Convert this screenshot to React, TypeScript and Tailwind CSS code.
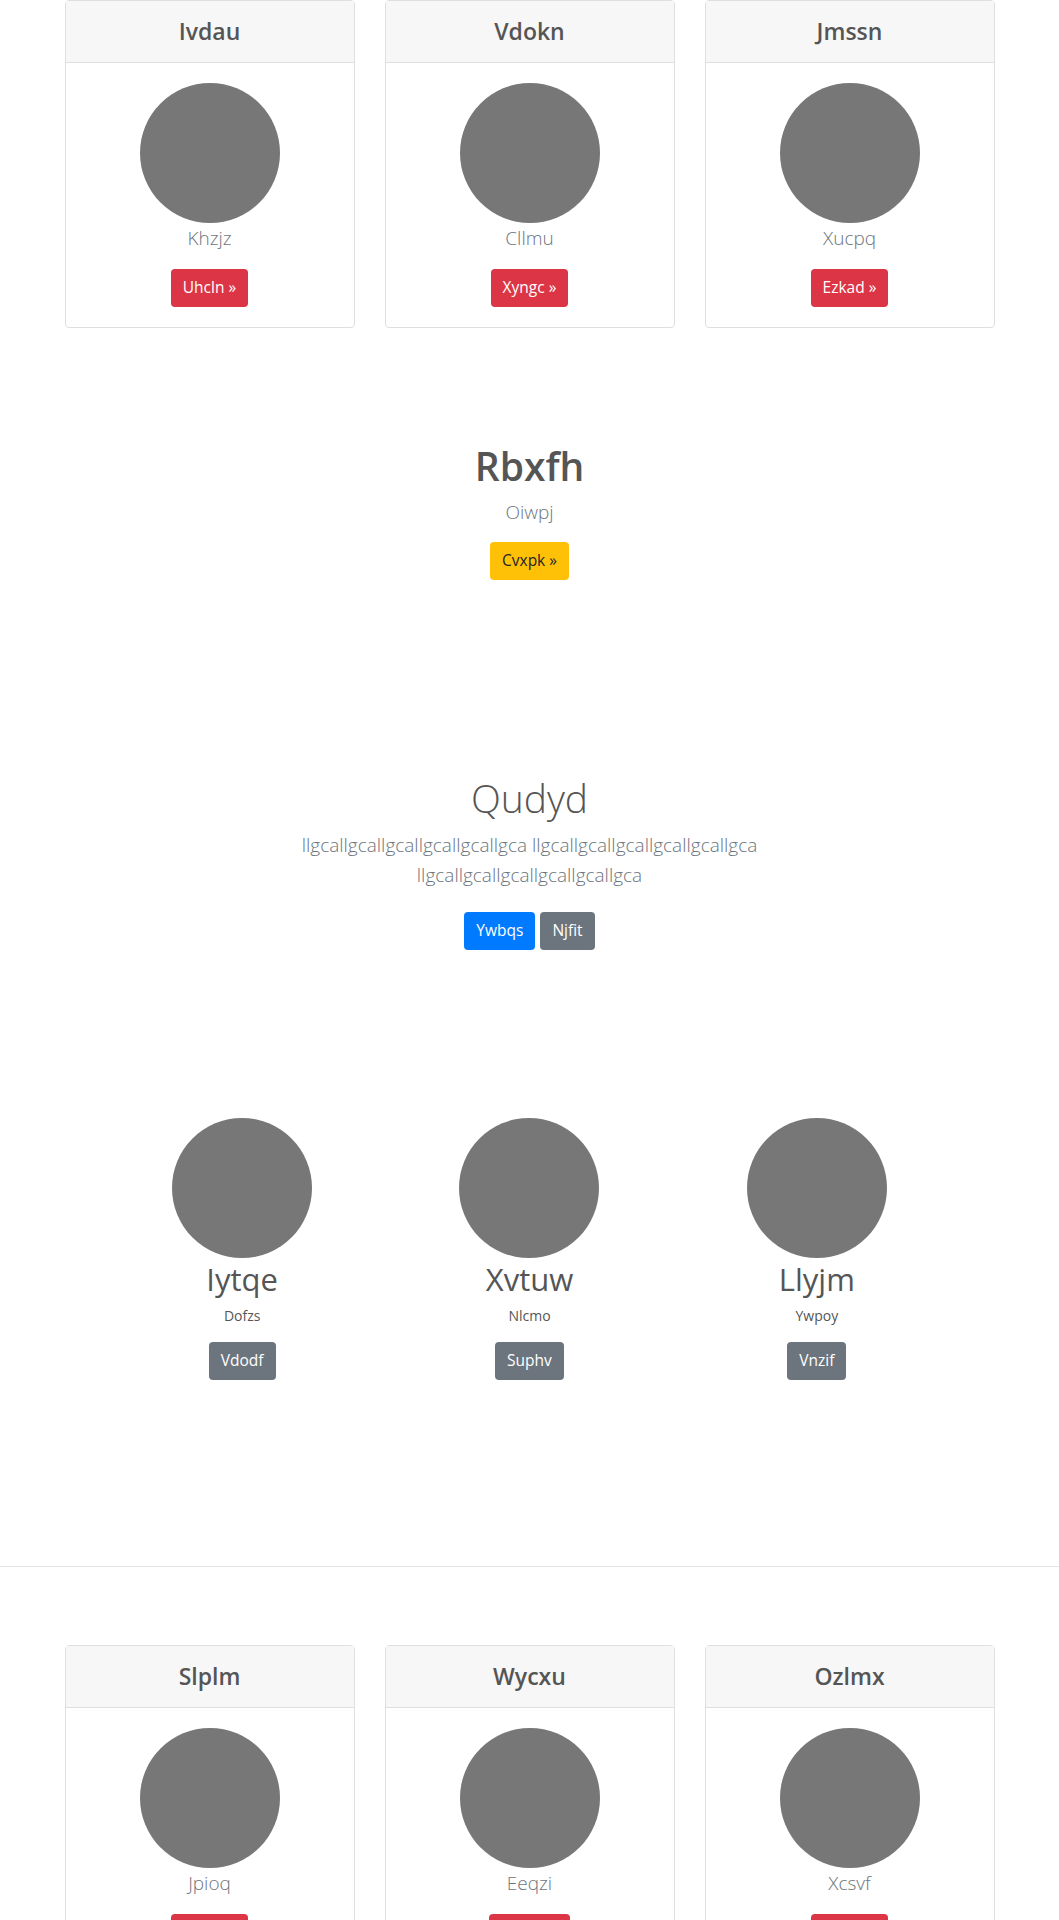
import React from "react";

const font = { fontFamily: '"Open Sans", "Noto Sans", Arial, sans-serif' };

function Btn({ children, variant }: { children: React.ReactNode; variant: "red" | "yellow" | "blue" | "gray" }) {
  const cls =
    variant === "red"
      ? "bg-[#dc3545] text-white"
      : variant === "yellow"
      ? "bg-[#ffc107] text-[#212529]"
      : variant === "blue"
      ? "bg-[#007bff] text-white"
      : "bg-[#6c757d] text-white";
  return (
    <span className={`inline-flex h-[38px] items-center rounded-[4px] px-3 text-[15.5px] ${cls}`}>{children}</span>
  );
}

function Card({ title, sub, btn }: { title: string; sub: string; btn: string }) {
  return (
    <div className="flex flex-col rounded-[4px] border border-[#dfdfdf] bg-white">
      <div className="flex h-[62px] items-center justify-center border-b border-[#dfdfdf] bg-[#f7f7f7] text-[23px] font-semibold text-[#555]">
        {title}
      </div>
      <div className="flex flex-col items-center p-5">
        <div className="h-[140px] w-[140px] rounded-full bg-[#777]" />
        <p className="mb-4 text-[19px] font-light leading-[30px] text-[#6c757d]">{sub}</p>
        <Btn variant="red">{btn} »</Btn>
      </div>
    </div>
  );
}

function Person({ name, sub, btn }: { name: string; sub: string; btn: string }) {
  return (
    <div className="flex flex-col items-center">
      <div className="h-[140px] w-[140px] rounded-full bg-[#777]" />
      <h2 className="mt-[2px] text-[31px] leading-[38px] text-[#555]">{name}</h2>
      <p className="mt-[7px] mb-4 text-[14px] leading-[21px] text-[#555]">{sub}</p>
      <Btn variant="gray">{btn}</Btn>
    </div>
  );
}

export default function App() {
  const word = "llgcallgcallgcallgcallgcallgca";
  return (
    <div className="min-h-[1920px] bg-white pb-10" style={font}>
      <div className="mx-auto grid w-[930px] grid-cols-3 gap-[30px]">
        <Card title="Ivdau" sub="Khzjz" btn="Uhcln" />
        <Card title="Vdokn" sub="Cllmu" btn="Xyngc" />
        <Card title="Jmssn" sub="Xucpq" btn="Ezkad" />
      </div>

      <div className="mt-[114px] flex flex-col items-center text-center">
        <h1 className="mb-[7px] text-[39px] font-semibold leading-[48px] text-[#555]">Rbxfh</h1>
        <p className="mb-[15px] text-[19px] font-light leading-[30px] text-[#6c757d]">Oiwpj</p>
        <Btn variant="yellow">Cvxpk »</Btn>
      </div>

      <div className="mt-[194px] flex flex-col items-center text-center">
        <h1 className="mb-2 text-[39px] font-light leading-[48px] text-[#555]">Qudyd</h1>
        <p className="mb-[22px] text-[19px] font-light leading-[30px] text-[#6c757d]">
          {word} {word}
          <br />
          {word}
        </p>
        <div className="flex gap-[5px]">
          <Btn variant="blue">Ywbqs</Btn>
          <Btn variant="gray">Njfit</Btn>
        </div>
      </div>

      <div className="mx-auto mt-[168px] grid w-[862px] grid-cols-3">
        <Person name="Iytqe" sub="Dofzs" btn="Vdodf" />
        <Person name="Xvtuw" sub="Nlcmo" btn="Suphv" />
        <Person name="Llyjm" sub="Ywpoy" btn="Vnzif" />
      </div>

      <hr className="mt-[186px] border-t border-[#e5e5e5]" />

      <div className="mx-auto mt-[78px] grid w-[930px] grid-cols-3 gap-[30px]">
        <Card title="Slplm" sub="Jpioq" btn="Hxqrt" />
        <Card title="Wycxu" sub="Eeqzi" btn="Mvbra" />
        <Card title="Ozlmx" sub="Xcsvf" btn="Rptka" />
      </div>
    </div>
  );
}
